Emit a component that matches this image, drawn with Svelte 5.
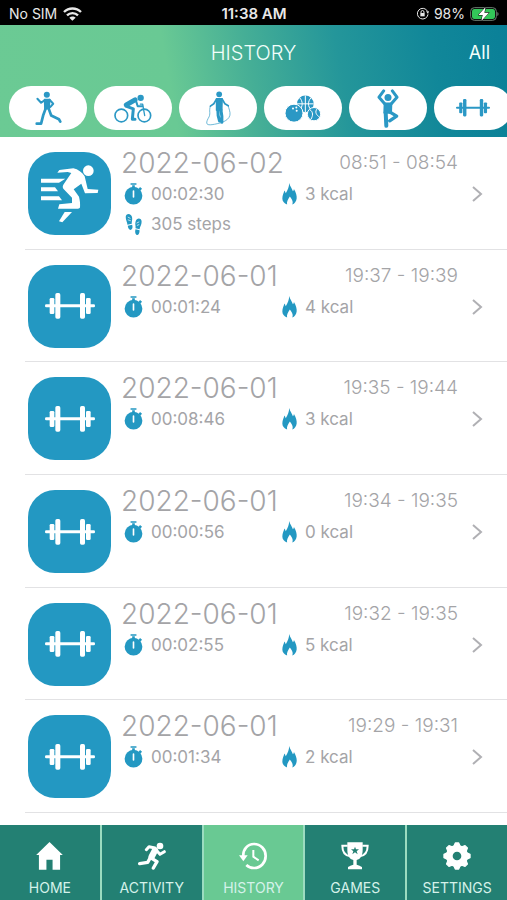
<script>
  const FILTERS = [
    { icon: 'run', label: 'Running' },
    { icon: 'bike', label: 'Cycling' },
    { icon: 'rope', label: 'Jump rope' },
    { icon: 'balls', label: 'Ball sports' },
    { icon: 'yoga', label: 'Yoga' },
    { icon: 'dumbbell', label: 'Weights' },
  ];

  const SESSIONS = [
    { icon: 'sprint', date: '2022-06-02', from: '08:51', to: '08:54', duration: '00:02:30', kcal: 3, steps: 305 },
    { icon: 'dumbbell', date: '2022-06-01', from: '19:37', to: '19:39', duration: '00:01:24', kcal: 4 },
    { icon: 'dumbbell', date: '2022-06-01', from: '19:35', to: '19:44', duration: '00:08:46', kcal: 3 },
    { icon: 'dumbbell', date: '2022-06-01', from: '19:34', to: '19:35', duration: '00:00:56', kcal: 0 },
    { icon: 'dumbbell', date: '2022-06-01', from: '19:32', to: '19:35', duration: '00:02:55', kcal: 5 },
    { icon: 'dumbbell', date: '2022-06-01', from: '19:29', to: '19:31', duration: '00:01:34', kcal: 2 },
  ];

  const TABS = ['HOME', 'ACTIVITY', 'HISTORY', 'GAMES', 'SETTINGS'];
  let active = $state('HISTORY');

  // gear teeth are one rounded wedge, repeated every 45 degrees
  const TEETH = [0, 45, 90, 135, 180, 225, 270, 315];
</script>

{#snippet dumbbell()}
  <svg class="dumbbell" viewBox="0 0 150 78" fill="currentColor" aria-hidden="true">
    <rect x="0" y="34" width="150" height="9" rx="4" />
    <rect x="31" y="0" width="15" height="77" rx="5" />
    <rect x="14" y="15" width="14" height="48" rx="4" />
    <rect x="105" y="0" width="15" height="77" rx="5" />
    <rect x="123" y="15" width="14" height="48" rx="4" />
  </svg>
{/snippet}

{#snippet filterIcon(name)}
  {#if name === 'run'}
    <svg width="27" height="35" viewBox="0 0 80 104" fill="none" stroke="currentColor" stroke-linecap="round" stroke-linejoin="round" aria-hidden="true">
      <circle cx="35" cy="11" r="9" fill="currentColor" stroke="none" />
      <path d="M28 25h16l-2 28H29z" fill="currentColor" stroke-width="4" />
      <path d="M29 27L18 35 7 23M43 26l11 12-9 10" stroke-width="6" />
      <path d="M32 51l-8 22-6 24H5" stroke-width="8" />
      <path d="M40 51l8 22 23 11 4 7" stroke-width="8" />
    </svg>
  {:else if name === 'bike'}
    <svg width="38" height="29" viewBox="0 0 114 86" fill="none" stroke="currentColor" stroke-linecap="round" stroke-linejoin="round" aria-hidden="true">
      <circle cx="22" cy="64" r="19" stroke-width="5" />
      <circle cx="91" cy="64" r="19" stroke-width="5" />
      <circle cx="80" cy="11" r="9.5" fill="currentColor" stroke="none" />
      <path d="M37 32l26-15" stroke-width="15" />
      <path d="M66 20l5 16h14" stroke-width="6" />
      <path d="M36 36l22 8-3 31h8" stroke-width="9" />
      <path d="M79 30h7l6 34" stroke-width="4" />
    </svg>
  {:else if name === 'rope'}
    <svg width="25" height="35" viewBox="0 0 74 104" fill="none" stroke="currentColor" stroke-linecap="round" stroke-linejoin="round" aria-hidden="true">
      <circle cx="39" cy="10" r="8.5" fill="currentColor" stroke="none" />
      <path d="M31 23h17l-1 34H31z" fill="currentColor" stroke-width="4" />
      <path d="M31 24l-8 14-10 7M48 24l8 14 10 6" stroke-width="5" />
      <path d="M35 55l1 18 4 16M44 55l3 20v18" stroke-width="9" />
      <path d="M13 45C7 60 16 68 6 82c-8 16-4 20 12 18 18-3 48-8 53-28 2-10-4-20-5-28" stroke-width="2" />
    </svg>
  {:else if name === 'balls'}
    <svg width="36" height="27" viewBox="0 0 108 80" aria-hidden="true">
      <circle cx="61" cy="26" r="25" fill="currentColor" />
      <path d="M61 1v50M36 26h50M44 8c10 10 10 26 0 36M78 8c-10 10-10 26 0 36" fill="none" stroke="#fff" stroke-width="3" />
      <circle cx="27" cy="54" r="27" fill="currentColor" stroke="#fff" stroke-width="3" />
      <circle cx="24" cy="40" r="3" fill="#fff" />
      <circle cx="34" cy="37" r="3" fill="#fff" />
      <circle cx="35" cy="47" r="3" fill="#fff" />
      <circle cx="87" cy="57" r="20" fill="currentColor" stroke="#fff" stroke-width="3" />
      <path d="M75 44c10 6 9 18 3 28M97 40c-9 10-3 20 7 26" fill="none" stroke="#fff" stroke-width="3" />
    </svg>
  {:else if name === 'yoga'}
    <svg width="22" height="39" viewBox="0 0 66 116" fill="none" stroke="currentColor" stroke-linecap="round" stroke-linejoin="round" aria-hidden="true">
      <circle cx="33" cy="25" r="10.5" fill="currentColor" stroke="none" />
      <path d="M20 5L6 24l17 20M46 5l14 19-17 20" stroke-width="9" />
      <path d="M23 43h20l-1 28H22z" fill="currentColor" stroke-width="6" />
      <path d="M26 70l2 40" stroke-width="12" />
      <path d="M39 69l20 12-21 14" stroke-width="10" />
    </svg>
  {:else}
    {@render dumbbell()}
  {/if}
{/snippet}

{#snippet tabIcon(name)}
  {#if name === 'HOME'}
    <svg width="27" height="28" viewBox="0 0 78 82" fill="currentColor" aria-hidden="true">
      <path d="M39 0l39 38h-8v43H48V52H30v29H8V38H0z" />
    </svg>
  {:else if name === 'ACTIVITY'}
    <svg width="28" height="28" viewBox="0 0 84 82" fill="none" stroke="currentColor" stroke-linecap="round" stroke-linejoin="round" aria-hidden="true">
      <circle cx="66" cy="11" r="10" fill="currentColor" stroke="none" />
      <path d="M25 22l8-9 18 4M57 26l9 10 13-8" stroke-width="9" />
      <path d="M51 24L41 43" stroke-width="19" />
      <path d="M41 48l16 10-11 19M37 46l-8 14-24 4" stroke-width="10" />
    </svg>
  {:else if name === 'HISTORY'}
    <svg width="28" height="28" viewBox="0 0 84 84" fill="none" stroke="currentColor" stroke-width="8" aria-hidden="true">
      <path d="M13 44C11 22 26 6 45 6c20 0 35 16 35 36S65 78 45 78c-9 0-17-3-23-9" />
      <path d="M0 40h26L13 58z" fill="currentColor" stroke="none" />
      <path d="M43 24v20l16 11" stroke-width="6" />
    </svg>
  {:else if name === 'GAMES'}
    <svg width="28" height="28" viewBox="0 0 84 82" aria-hidden="true">
      <path d="M20 10H4c0 20 10 30 24 32M64 10h16c0 20-10 30-24 32" fill="none" stroke="currentColor" stroke-width="6" />
      <path d="M19 0h46v22c0 18-7 28-18 31v14c6 2 12 4 16 7v7H21v-7c4-3 10-5 16-7V53C26 50 19 40 19 22z" fill="currentColor" />
      <path class="star" d="M42 13l3 8h9l-7 6 3 9-8-6-8 6 3-9-7-6h9z" />
    </svg>
  {:else}
    <svg width="28" height="28" viewBox="0 0 84 84" fill="currentColor" aria-hidden="true">
      {#each TEETH as angle}
        <path d="M32 14l5-11h10l5 11z" stroke="currentColor" stroke-width="4" stroke-linejoin="round" transform="rotate({angle} 42 42)" />
      {/each}
      <circle cx="42" cy="42" r="23" fill="none" stroke="currentColor" stroke-width="20" />
    </svg>
  {/if}
{/snippet}

<div class="screen">
  <div class="status">
    <span class="carrier">
      No SIM
      <svg width="19" height="14" viewBox="0 0 57 42" fill="none" stroke="currentColor" stroke-width="7" aria-hidden="true">
        <path d="M3 15c14-14 37-14 51 0M12 25c9-9 24-9 33 0" />
        <path d="M28 41l-9-9c5-5 14-5 19 0z" fill="currentColor" stroke="none" />
      </svg>
    </span>
    <strong>11:38 AM</strong>
    <span class="power">
      <svg width="13" height="13" viewBox="0 0 39 39" fill="none" stroke="currentColor" stroke-width="3" aria-hidden="true">
        <path d="M34 12A16 16 0 1 0 36 22" />
        <path d="M30 13h9l-3 8z" fill="currentColor" stroke="none" />
        <rect x="13" y="18" width="13" height="10" fill="currentColor" stroke="none" />
        <path d="M15 18v-3a4 4 0 0 1 9 0v3" />
      </svg>
      <span>98%</span>
      <svg width="29" height="14" viewBox="0 0 87 42" aria-hidden="true">
        <rect x="2" y="2" width="77" height="38" rx="11" fill="none" stroke="#6f7f74" stroke-width="3" />
        <path d="M82 15c5 2 5 10 0 12z" fill="#6f7f74" />
        <rect x="6" y="6" width="69" height="30" rx="7" fill="#33c759" />
        <path d="M47 0L25 24h13l-4 18 23-25H43z" fill="#fff" stroke="#000" stroke-width="3" paint-order="stroke" />
      </svg>
    </span>
  </div>

  <header>
    <div class="title">
      <h1>HISTORY</h1>
      <button class="all">All</button>
    </div>
    <div class="filters">
      {#each FILTERS as f}
        <button class="pill" aria-label={f.label}>{@render filterIcon(f.icon)}</button>
      {/each}
    </div>
  </header>

  <main>
    {#each SESSIONS as s}
      <a class="session" href="#session">
        <span class="tile">
          {#if s.icon === 'sprint'}
            <svg class="sprint" viewBox="0 0 249 249" fill="currentColor" aria-hidden="true">
              <circle cx="181" cy="56" r="16" />
              <path d="M88 62l6-8 42-5c14 3 27 12 34 24l9 38 32 2-2 10-38 1-11-29-23 17 16 22c3 12 4 22 3 32-1 3-3 4-6 4H90l4-13 38-4v-16l-26-27c-3-5-2-10 2-15l22-32-11-3z" />
              <path d="M110 180h22l-29 31-10-3z" />
              <path d="M39 80h73l-19 12H39zM39 106h42l9 12H39zM39 133h54l9 12H39z" />
            </svg>
          {:else}
            {@render dumbbell()}
          {/if}
        </span>
        <span class="body">
          <span class="when">
            <time class="date">{s.date}</time>
            <span class="time">{s.from} - {s.to}</span>
          </span>
          <span class="stats">
            <span class="stat">
              <svg width="19" height="22" viewBox="0 0 58 66" fill="currentColor" aria-hidden="true">
                <circle cx="29" cy="38" r="27" />
                <path d="M20 0h18v5H20zM25 6h8v8h-8zM49 12l6 5-5 6-6-5z" />
                <path d="M29 24v18" stroke="#fff" stroke-width="5" stroke-linecap="round" />
              </svg>
              {s.duration}
            </span>
            <span class="stat">
              <svg width="15" height="22" viewBox="0 0 44 64" fill="currentColor" aria-hidden="true">
                <path d="M21 0c3 11 8 15 11 24 2-2 3-4 3-7 6 10 9 20 8 28-1 9-6 15-13 18 4-9-1-16-7-24-5 8-10 15-8 24C6 59 1 53 1 45c0-9 4-15 6-23 2 3 3 5 4 8C17 20 21 12 21 0z" />
              </svg>
              {s.kcal} kcal
            </span>
            {#if s.steps}
              <span class="stat">
                <svg width="19" height="23" viewBox="0 0 56 68" fill="currentColor" aria-hidden="true">
                  <path d="M5 12c0-12 17-12 19 2 1 8-2 12-1 18l-13 3C10 27 5 22 5 12zM11 38l13-3c3 10-1 15-5 15s-7-4-8-12z" />
                  <path d="M52 26c0-12-15-13-18 0-2 8 1 12 0 19l12 3c1-8 6-12 6-22zM46 51l-12-3c-3 10 1 17 5 17s7-5 7-14z" />
                  <path d="M11 12l8 4M11 20l9 3M45 26l-8 4M45 34l-7 3" stroke="#fff" stroke-width="2" />
                </svg>
                {s.steps} steps
              </span>
            {/if}
          </span>
        </span>
        <svg class="chevron" width="11" height="16" viewBox="0 0 11 16" fill="none" stroke="currentColor" stroke-width="2" aria-hidden="true">
          <path d="M1 1l8 7-8 7" />
        </svg>
      </a>
    {/each}
  </main>

  <nav>
    {#each TABS as tab}
      <a href="#{tab.toLowerCase()}" class:active={active === tab} onclick={() => (active = tab)}>
        {@render tabIcon(tab)}
        <span>{tab}</span>
      </a>
    {/each}
  </nav>
</div>

<style>
  :global(body) {
    margin: 0;
    background: #fff;
  }

  .screen {
    min-height: 100vh;
    display: flex;
    flex-direction: column;
    font-family: Inter, Roboto, "Liberation Sans", sans-serif;
    color: #a4a4a7;
  }

  button {
    border: 0;
    padding: 0;
    font: inherit;
    cursor: pointer;
  }

  a {
    color: inherit;
    text-decoration: none;
  }

  svg {
    flex: none;
    display: block;
  }

  .status {
    height: 25px;
    padding: 2px 8px 0 9px;
    box-sizing: border-box;
    display: grid;
    grid-template-columns: 1fr auto 1fr;
    align-items: center;
    background: #000;
    color: #e8e8e8;
    font-size: 14px;
  }

  .status strong {
    font-size: 15px;
    font-weight: 600;
  }

  .carrier,
  .power {
    display: flex;
    align-items: center;
    gap: 6px;
  }

  .power {
    justify-content: flex-end;
    gap: 5px;
  }

  header {
    height: 112px;
    background: linear-gradient(80deg, #6bca94 0%, #69c994 34%, #45ae96 50%, #24969a 67%, #118799 85%, #0a8098 100%);
    color: #f2fffb;
  }

  .title {
    height: 61px;
    padding: 0 17px 6px;
    box-sizing: border-box;
    display: grid;
    grid-template-columns: 1fr auto 1fr;
    align-items: center;
  }

  h1 {
    grid-column: 2;
    margin: 0;
    font-size: 20px;
    font-weight: 300;
  }

  .all {
    justify-self: end;
    background: none;
    color: inherit;
    font-size: 18px;
  }

  .filters {
    display: flex;
    gap: 7px;
    padding-left: 9px;
    overflow: hidden;
  }

  .pill {
    flex: none;
    width: 78px;
    height: 44px;
    display: flex;
    align-items: center;
    justify-content: center;
    border-radius: 22px;
    background: #fff;
    color: #2b98c5;
  }

  .pill .dumbbell {
    width: 34px;
  }

  main {
    flex: 1;
    display: flex;
    flex-direction: column;
    padding: 0 0 12px 25px;
  }

  .session {
    flex: 1 0 112px;
    box-sizing: border-box;
    display: flex;
    padding: 10px 24px 0 3px;
    border-bottom: 1px solid #e2e2e4;
  }

  .tile {
    flex: none;
    width: 83px;
    height: 83px;
    margin-top: 5px;
    display: flex;
    align-items: center;
    justify-content: center;
    border-radius: 27px;
    background: #2398c2;
    color: #fff;
  }

  .tile .dumbbell {
    width: 50px;
  }

  .sprint {
    width: 83px;
  }

  .body {
    flex: 1;
    padding: 0 14px 0 10px;
  }

  .when {
    display: flex;
    justify-content: space-between;
    line-height: 32px;
  }

  .date {
    font-size: 28px;
    font-weight: 300;
  }

  .time {
    font-size: 19px;
    font-weight: 300;
  }

  .stats {
    display: grid;
    grid-template-columns: 158px 1fr;
    padding-left: 3px;
  }

  .stat {
    height: 30px;
    display: flex;
    align-items: center;
    gap: 8px;
    font-size: 17px;
  }

  .stat svg {
    color: #2398c2;
  }

  .chevron {
    margin-top: 39px;
    color: #b0b0b4;
  }

  nav {
    height: 75px;
    display: grid;
    grid-template-columns: repeat(5, 1fr);
    gap: 2px;
    background: #9bdcc0;
    color: #fff;
  }

  nav a {
    display: flex;
    flex-direction: column;
    align-items: center;
    gap: 9px;
    padding-top: 17px;
    background: #238073;
    font-size: 14px;
  }

  nav a.active {
    background: #69c993;
  }

  nav span {
    color: #d5f2ea;
  }

  .star {
    fill: #238073;
  }
</style>
